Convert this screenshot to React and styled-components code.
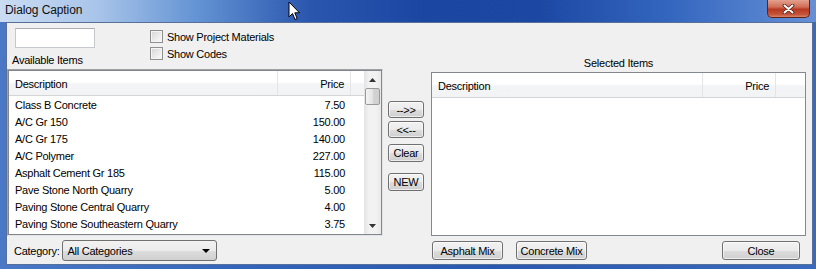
import React from "react";
import styled, { createGlobalStyle } from "styled-components";

const items = [
  { name: "Class B Concrete", price: "7.50" },
  { name: "A/C Gr 150", price: "150.00" },
  { name: "A/C Gr 175", price: "140.00" },
  { name: "A/C Polymer", price: "227.00" },
  { name: "Asphalt Cement Gr 185", price: "115.00" },
  { name: "Pave Stone North Quarry", price: "5.00" },
  { name: "Paving Stone Central Quarry", price: "4.00" },
  { name: "Paving Stone Southeastern Quarry", price: "3.75" },
];

export default function App() {
  return (
    <>
      <GlobalStyle />
      <Window>
        <TitleBar>
          <Caption>Dialog Caption</Caption>
          <CloseButton>
            <svg width="13" height="10" viewBox="0 0 13 10">
              <path d="M2.5 1.5 L10.5 8.5 M10.5 1.5 L2.5 8.5" stroke="#5a1a10" strokeWidth="3.6" strokeLinecap="round" />
              <path d="M2.5 1.5 L10.5 8.5 M10.5 1.5 L2.5 8.5" stroke="#fff" strokeWidth="2" strokeLinecap="round" />
            </svg>
          </CloseButton>
        </TitleBar>
        <Cursor width="13" height="20" viewBox="0 0 13 20">
          <path d="M1 1 L1 16 L4.5 12.5 L7 18.5 L9.2 17.6 L6.8 11.8 L11.5 11.8 Z" fill="#fff" stroke="#000" strokeWidth="1" strokeLinejoin="round" />
        </Cursor>
        <Client>
          <LeftColumn>
            <TopArea>
              <div>
                <SearchBox />
                <Label $top={6} $left={-3}>Available Items</Label>
              </div>
              <CheckList>
                <CheckRow><CheckBox />Show Project Materials</CheckRow>
                <CheckRow><CheckBox />Show Codes</CheckRow>
              </CheckList>
            </TopArea>
            <OuterFrame>
              <ListView $height={165}>
                <ListMain>
                  <Header>
                    <HeadCell $width={269}>Description</HeadCell>
                    <HeadCell $width={73} $right>Price</HeadCell>
                    <HeadFill />
                  </Header>
                  {items.map((it) => (
                    <Row key={it.name}>
                      <Cell $width={269}>{it.name}</Cell>
                      <Cell $width={73} $right>{it.price}</Cell>
                    </Row>
                  ))}
                </ListMain>
                <ScrollBar>
                  <Arrow>
                    <svg width="7" height="4" viewBox="0 0 7 4"><path d="M0 4 L3.5 0 L7 4 Z" fill="#333" /></svg>
                  </Arrow>
                  <Thumb />
                  <Track />
                  <Arrow>
                    <svg width="7" height="4" viewBox="0 0 7 4"><path d="M0 0 L3.5 4 L7 0 Z" fill="#333" /></svg>
                  </Arrow>
                </ScrollBar>
              </ListView>
            </OuterFrame>
            <CategoryRow>
              <span>Category:</span>
              <Combo>
                All Categories
                <svg width="8" height="4" viewBox="0 0 8 4"><path d="M0 0 L8 0 L4 4 Z" fill="#000" /></svg>
              </Combo>
            </CategoryRow>
          </LeftColumn>

          <MiddleColumn>
            <Button $w={36} $h={17} $mt={0}>--&gt;&gt;</Button>
            <Button $w={36} $h={17} $mt={3}>&lt;&lt;--</Button>
            <Button $w={36} $h={18} $mt={6}>Clear</Button>
            <Button $w={36} $h={18} $mt={11}>NEW</Button>
          </MiddleColumn>

          <RightColumn>
            <SelectedLabel>Selected Items</SelectedLabel>
            <ListView $height={164}>
              <ListMain>
                <Header>
                  <HeadCell $width={271}>Description</HeadCell>
                  <HeadCell $width={73} $right>Price</HeadCell>
                  <HeadFill />
                </Header>
              </ListMain>
            </ListView>
            <ButtonRow>
              <Button $w={71} $h={19} $mt={0}>Asphalt Mix</Button>
              <Button $w={71} $h={19} $mt={0}>Concrete Mix</Button>
              <Spacer />
              <Button $w={78} $h={19} $mt={0}>Close</Button>
            </ButtonRow>
          </RightColumn>
        </Client>
      </Window>
    </>
  );
}

const GlobalStyle = createGlobalStyle`
  html, body { margin: 0; padding: 0; }
  body {
    font-family: "Liberation Sans", Arial, sans-serif;
    font-size: 11px;
    letter-spacing: -0.25px;
    color: #000;
  }
`;

const Window = styled.div`
  position: relative;
  width: 816px;
  height: 269px;
  overflow: hidden;
  display: flex;
  flex-direction: column;
  background: linear-gradient(to right, #4a78c6 0%, #3464ba 30%, #2a58b0 60%, #3a69bd 100%);
`;

const TitleBar = styled.div`
  height: 22px;
  display: flex;
  align-items: flex-start;
  background: linear-gradient(to right, #cadcf2 0%, #a8c4e9 12%, #6494d4 24%, #2a56ae 38%, #1b47a3 52%, #1c48a4 66%, #3466bf 82%, #6690d6 100%);
`;

const Caption = styled.div`
  font-size: 12px;
  letter-spacing: -0.1px;
  padding: 3px 0 0 5px;
  color: #111;
`;

const CloseButton = styled.div`
  margin-left: auto;
  margin-right: 6px;
  width: 43px;
  height: 18px;
  box-sizing: border-box;
  border: 1px solid #5e2419;
  border-top: none;
  border-radius: 0 0 5px 5px;
  background: linear-gradient(#e4a08e 0%, #d0705a 40%, #b63a22 55%, #c4543a 85%, #d98468 100%);
  display: flex;
  align-items: center;
  justify-content: center;
`;

const Cursor = styled.svg`
  position: absolute;
  left: 288px;
  top: 1px;
`;

const Client = styled.div`
  margin: 0 3px 4px 6px;
  flex: 1;
  box-sizing: border-box;
  border: 1px solid #56709a;
  background: #f0f0f0;
  display: grid;
  grid-template-columns: 376px 36px 377px;
  column-gap: 5px;
  padding-right: 4px;
  & > :nth-child(2) { margin-right: 2px; }
`;

const LeftColumn = styled.div`
  display: flex;
  flex-direction: column;
`;

const TopArea = styled.div`
  height: 46px;
  display: flex;
  padding-left: 8px;
`;

const SearchBox = styled.div`
  margin-top: 5px;
  width: 80px;
  height: 20px;
  box-sizing: border-box;
  background: #fff;
  border: 1px solid #c5c7cc;
  border-top-color: #abadb3;
`;

const Label = styled.div`
  margin-top: ${(p) => p.$top}px;
  margin-left: ${(p) => p.$left}px;
  line-height: 12px;
`;

const CheckList = styled.div`
  margin-left: 55px;
  padding-top: 7px;
  display: flex;
  flex-direction: column;
  gap: 4px;
`;

const CheckRow = styled.div`
  display: flex;
  align-items: center;
  gap: 4px;
  height: 13px;
`;

const CheckBox = styled.span`
  width: 13px;
  height: 13px;
  box-sizing: border-box;
  border: 1px solid #8e8f8f;
  background: linear-gradient(135deg, #d6d6d6 0%, #f4f4f4 80%);
  box-shadow: inset 0 0 0 1px #f4f4f4;
`;

const OuterFrame = styled.div`
  border: 1px solid #a0a0a0;
  border-right-color: #e3e3e3;
  border-bottom-color: #e3e3e3;
  padding: 0;
`;

const ListView = styled.div`
  height: ${(p) => p.$height}px;
  box-sizing: border-box;
  border: 1px solid #828790;
  background: #fff;
  display: flex;
  overflow: hidden;
`;

const ListMain = styled.div`
  flex: 1;
  display: flex;
  flex-direction: column;
`;

const Header = styled.div`
  height: 24px;
  display: flex;
  border-bottom: 1px solid #d5d5d5;
  background: linear-gradient(#ffffff 0%, #ffffff 45%, #f3f4f6 55%, #f2f3f5 100%);
`;

const HeadCell = styled.div`
  width: ${(p) => p.$width}px;
  box-sizing: border-box;
  border-right: 1px solid #e3e5e8;
  display: flex;
  align-items: center;
  padding-top: 1px;
  justify-content: ${(p) => (p.$right ? "flex-end" : "flex-start")};
  padding-left: ${(p) => (p.$right ? 0 : 6)}px;
  padding-right: ${(p) => (p.$right ? 6 : 0)}px;
`;

const HeadFill = styled.div`
  flex: 1;
`;

const Row = styled.div`
  height: 17px;
  display: flex;
  align-items: center;
`;

const Cell = styled.div`
  width: ${(p) => p.$width}px;
  box-sizing: border-box;
  text-align: ${(p) => (p.$right ? "right" : "left")};
  padding: ${(p) => (p.$right ? "0 6px 0 0" : "0 0 0 6px")};
  white-space: nowrap;
`;

const ScrollBar = styled.div`
  width: 17px;
  display: flex;
  flex-direction: column;
  background: linear-gradient(to right, #e3e3e3, #f2f2f2 30%, #f2f2f2 70%, #e8e8e8);
`;

const Arrow = styled.div`
  height: 17px;
  display: flex;
  align-items: center;
  justify-content: center;
`;

const Thumb = styled.div`
  margin: 0 1px;
  height: 17px;
  box-sizing: border-box;
  border: 1px solid #9a9a9a;
  border-radius: 2px;
  background: linear-gradient(to right, #f3f3f3, #e4e4e4 50%, #d4d4d4 51%, #cfcfcf);
`;

const Track = styled.div`
  flex: 1;
`;

const CategoryRow = styled.div`
  display: flex;
  align-items: center;
  gap: 3px;
  padding: 4px 0 0 7px;
`;

const Combo = styled.div`
  width: 155px;
  height: 21px;
  box-sizing: border-box;
  border: 1px solid #707070;
  border-radius: 3px;
  background: linear-gradient(#f2f2f2 0%, #ebebeb 50%, #dddddd 51%, #cfcfcf 100%);
  display: flex;
  align-items: center;
  justify-content: space-between;
  padding: 0 6px 0 4px;
`;

const MiddleColumn = styled.div`
  display: flex;
  flex-direction: column;
  padding-top: 78px;
`;

const Button = styled.div`
  width: ${(p) => p.$w}px;
  height: ${(p) => p.$h}px;
  margin-top: ${(p) => p.$mt}px;
  box-sizing: border-box;
  flex-shrink: 0;
  border: 1px solid #707070;
  border-radius: 3px;
  background: linear-gradient(#f2f2f2 0%, #ebebeb 50%, #dddddd 51%, #cfcfcf 100%);
  box-shadow: inset 0 0 0 1px rgba(255, 255, 255, 0.6);
  display: flex;
  align-items: center;
  justify-content: center;
  white-space: nowrap;
`;

const RightColumn = styled.div`
  display: flex;
  flex-direction: column;
  padding-left: 2px;
`;

const SelectedLabel = styled.div`
  height: 49px;
  display: flex;
  align-items: flex-end;
  justify-content: center;
  padding-bottom: 3px;
  box-sizing: border-box;
`;

const ButtonRow = styled.div`
  display: flex;
  gap: 13px;
  padding: 5px 6px 0 1px;
`;

const Spacer = styled.div`
  flex: 1;
`;
